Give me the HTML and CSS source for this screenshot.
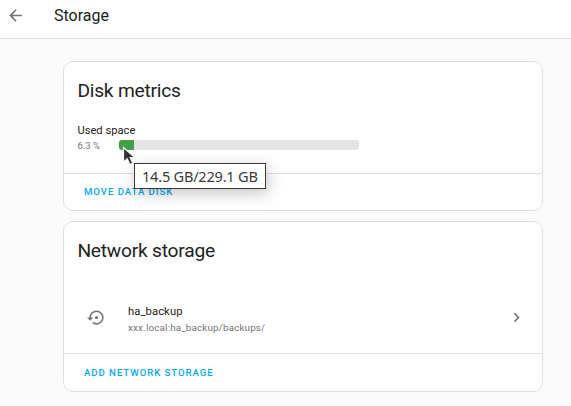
FILE: index.html
```html
<!DOCTYPE html>
<html lang="en">
<head>
<meta charset="utf-8">
<title>Storage</title>
<link rel="stylesheet" href="styles.css">
</head>
<body>
<header class="toolbar">
  <svg class="back" viewBox="0 0 24 24"><path d="M20,11V13H8L13.5,18.5L12.08,19.92L4.16,12L12.08,4.08L13.5,5.5L8,11H20Z"/></svg>
  <h1 class="page-title">Storage</h1>
</header>
<main class="content">
  <section class="card disk">
    <h2 class="card-title">Disk metrics</h2>
    <div class="card-body metric">
      <div class="metric-name">Used space</div>
      <div class="metric-row">
        <span class="metric-value">6.3 %</span>
        <div class="bar"><div class="bar-fill"></div></div>
      </div>
    </div>
    <div class="actions"><a class="button">MOVE DATA DISK</a></div>
    <svg class="cursor" viewBox="0 0 14 20"><path d="M1.5 1.5V16.2L5.2 12.8L7.9 18.6L10.8 17.3L8.2 11.6H12.8Z"/></svg>
    <div class="tooltip">14.5 GB/229.1 GB</div>
  </section>
  <section class="card network">
    <h2 class="card-title">Network storage</h2>
    <div class="card-body item">
      <svg class="item-icon" viewBox="0 0 24 24"><path d="M12,3A9,9 0 0,0 3,12H0L4,16L8,12H5A7,7 0 0,1 12,5A7,7 0 0,1 19,12A7,7 0 0,1 12,19C10.5,19 9.09,18.5 7.94,17.7L6.5,19.14C8.04,20.3 9.94,21 12,21A9,9 0 0,0 21,12A9,9 0 0,0 12,3M14,12A2,2 0 0,0 12,10A2,2 0 0,0 10,12A2,2 0 0,0 12,14A2,2 0 0,0 14,12Z"/></svg>
      <div class="item-text">
        <div class="item-name">ha_backup</div>
        <div class="item-path">xxx.local:ha_backup/backups/</div>
      </div>
      <svg class="chevron" viewBox="0 0 24 24"><path d="M8.59,16.58L13.17,12L8.59,7.41L10,6L16,12L10,18L8.59,16.58Z"/></svg>
    </div>
    <div class="actions"><a class="button">ADD NETWORK STORAGE</a></div>
  </section>
</main>
</body>
</html>
```
FILE: styles.css
```css
* { box-sizing: border-box; }
body {
  margin: 0;
  height: 406px;
  overflow: hidden;
  background: #fafafa;
  color: #212121;
  font-family: Roboto, sans-serif;
}
.toolbar {
  display: flex;
  align-items: center;
  height: 39px;
  padding: 0 6px 7px;
  background: #fff;
  border-bottom: 1px solid #e0e0e0;
}
.back { width: 19px; height: 19px; fill: #727272; }
.page-title { margin: 0 0 0 29px; font-size: 16px; line-height: 20px; font-weight: 400; }
.content {
  display: flex;
  flex-direction: column;
  gap: 10px;
  width: 480px;
  margin: 22px 0 0 63px;
}
.card {
  position: relative;
  display: flex;
  flex-direction: column;
  background: #fff;
  border: 1px solid #e0e0e0;
  border-radius: 10px;
}
.disk { height: 150px; }
.network { height: 171px; }
.card-title {
  margin: 0;
  padding: 10px 13.4px 0;
  font-size: 19.2px;
  line-height: 38px;
  font-weight: 400;
  letter-spacing: -0.23px;
}
.card-body { flex: 1; }
.metric { padding: 13px 13px 0; }
.metric-name { padding-left: 0.4px; font-size: 11.2px; line-height: 16px; }
.metric-row { display: flex; align-items: center; height: 12px; }
.metric-value { width: 42px; padding-left: 0.4px; font-size: 9.6px; color: #727272; }
.bar { width: 240px; height: 10px; overflow: hidden; border-radius: 3px; background: #e4e4e4; }
.bar-fill { width: 6.3%; height: 100%; background: #43a047; }
.actions {
  display: flex;
  align-items: center;
  height: 38px;
  padding: 0 20px;
  border-top: 1px solid #e0e0e0;
}
.disk .actions { height: 37px; padding-bottom: 1px; }
.button { color: #03a9f4; font-size: 9.6px; font-weight: 500; letter-spacing: 0.96px; }
.cursor {
  position: absolute;
  left: 58px;
  top: 84px;
  width: 14px;
  height: 20px;
  fill: #333;
  stroke: #fff;
  stroke-width: 1.2;
}
.tooltip {
  position: absolute;
  left: 70px;
  top: 101px;
  width: 132px;
  height: 26px;
  padding: 0 0 2px 7px;
  border: 1px solid #3b3b3b;
  background: #fff;
  color: #3b3b3b;
  font: 14.6px/24px "Noto Sans", sans-serif;
  letter-spacing: -0.24px;
  white-space: nowrap;
  box-shadow: 2px 4px 16px rgba(0, 0, 0, .24);
}
.item { display: flex; align-items: center; padding: 12px 16px 0 23px; }
.item-icon { width: 19px; height: 19px; fill: #727272; }
.item-text { flex: 1; margin-left: 22px; padding-top: 4px; }
.item-name { font-size: 11.2px; line-height: 17px; letter-spacing: 0.1px; }
.item-path { font-size: 9.8px; line-height: 16px; letter-spacing: 0.18px; color: #727272; }
.chevron { width: 19px; height: 19px; fill: #727272; }
```
